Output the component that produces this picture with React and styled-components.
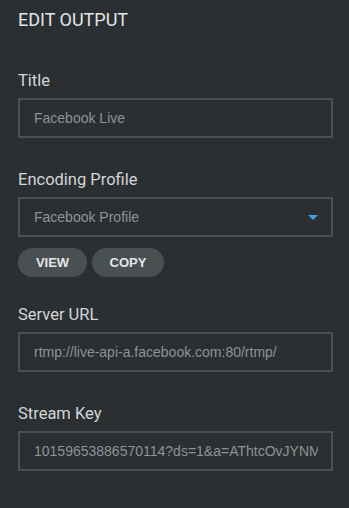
import React from "react";
import styled, { createGlobalStyle } from "styled-components";

const Global = createGlobalStyle`
  html, body { margin: 0; padding: 0; background: #2b2f31; }
  body { width: 349px; height: 508px; overflow: hidden; }
`;

const Panel = styled.div`
  box-sizing: border-box;
  width: 349px;
  height: 508px;
  background: #2b2f31;
  padding: 9px 16px 0 18px;
  font-family: Roboto, "Liberation Sans", Arial, sans-serif;
  color: #e2e4e5;
  display: flex;
  flex-direction: column;
`;

const Heading = styled.h1`
  margin: 0;
  font-size: 18px;
  font-weight: 400;
  line-height: 21px;
  color: #e3e5e6;
`;

const Field = styled.div`
  display: flex;
  flex-direction: column;
  margin-top: ${(p) => p.$top}px;
`;

const Label = styled.label`
  font-size: 16.5px;
  line-height: 19px;
  color: #d3d6d7;
  margin-bottom: 8px;
`;

const Box = styled.div`
  box-sizing: border-box;
  width: 315px;
  height: 40px;
  border: 2px solid #4a5053;
  display: flex;
  align-items: center;
  padding: 0 13px 0 14px;
`;

const Value = styled.span`
  font-family: "Liberation Sans", Arial, sans-serif;
  font-size: 14px;
  color: #8d9396;
  white-space: nowrap;
  overflow: hidden;
  flex: 1;
`;

const Caret = styled.span`
  width: 0;
  height: 0;
  border-left: 5px solid transparent;
  border-right: 5px solid transparent;
  border-top: 5px solid #3ba3e6;
  margin-top: 1px;
`;

const Buttons = styled.div`
  display: flex;
  gap: 5px;
  margin-top: 11px;
`;

const Pill = styled.button`
  box-sizing: border-box;
  height: 29px;
  width: ${(p) => p.$w}px;
  border: none;
  border-radius: 15px;
  background: #4a4f52;
  color: #e4e6e7;
  font-family: "Liberation Sans", Arial, sans-serif;
  font-weight: 700;
  font-size: 13px;
  padding: 0;
  display: flex;
  align-items: center;
  justify-content: center;
`;

export default function App() {
  return (
    <>
      <Global />
      <Panel>
        <Heading>EDIT OUTPUT</Heading>
        <Field $top={41}>
          <Label>Title</Label>
          <Box>
            <Value>Facebook Live</Value>
          </Box>
        </Field>
        <Field $top={32}>
          <Label>Encoding Profile</Label>
          <Box>
            <Value>Facebook Profile</Value>
            <Caret />
          </Box>
        </Field>
        <Buttons>
          <Pill $w={69}>VIEW</Pill>
          <Pill $w={72}>COPY</Pill>
        </Buttons>
        <Field $top={28}>
          <Label>Server URL</Label>
          <Box>
            <Value>rtmp://live-api-a.facebook.com:80/rtmp/</Value>
          </Box>
        </Field>
        <Field $top={32}>
          <Label>Stream Key</Label>
          <Box>
            <Value>10159653886570114?ds=1&amp;a=AThtcOvJYNM</Value>
          </Box>
        </Field>
      </Panel>
    </>
  );
}
